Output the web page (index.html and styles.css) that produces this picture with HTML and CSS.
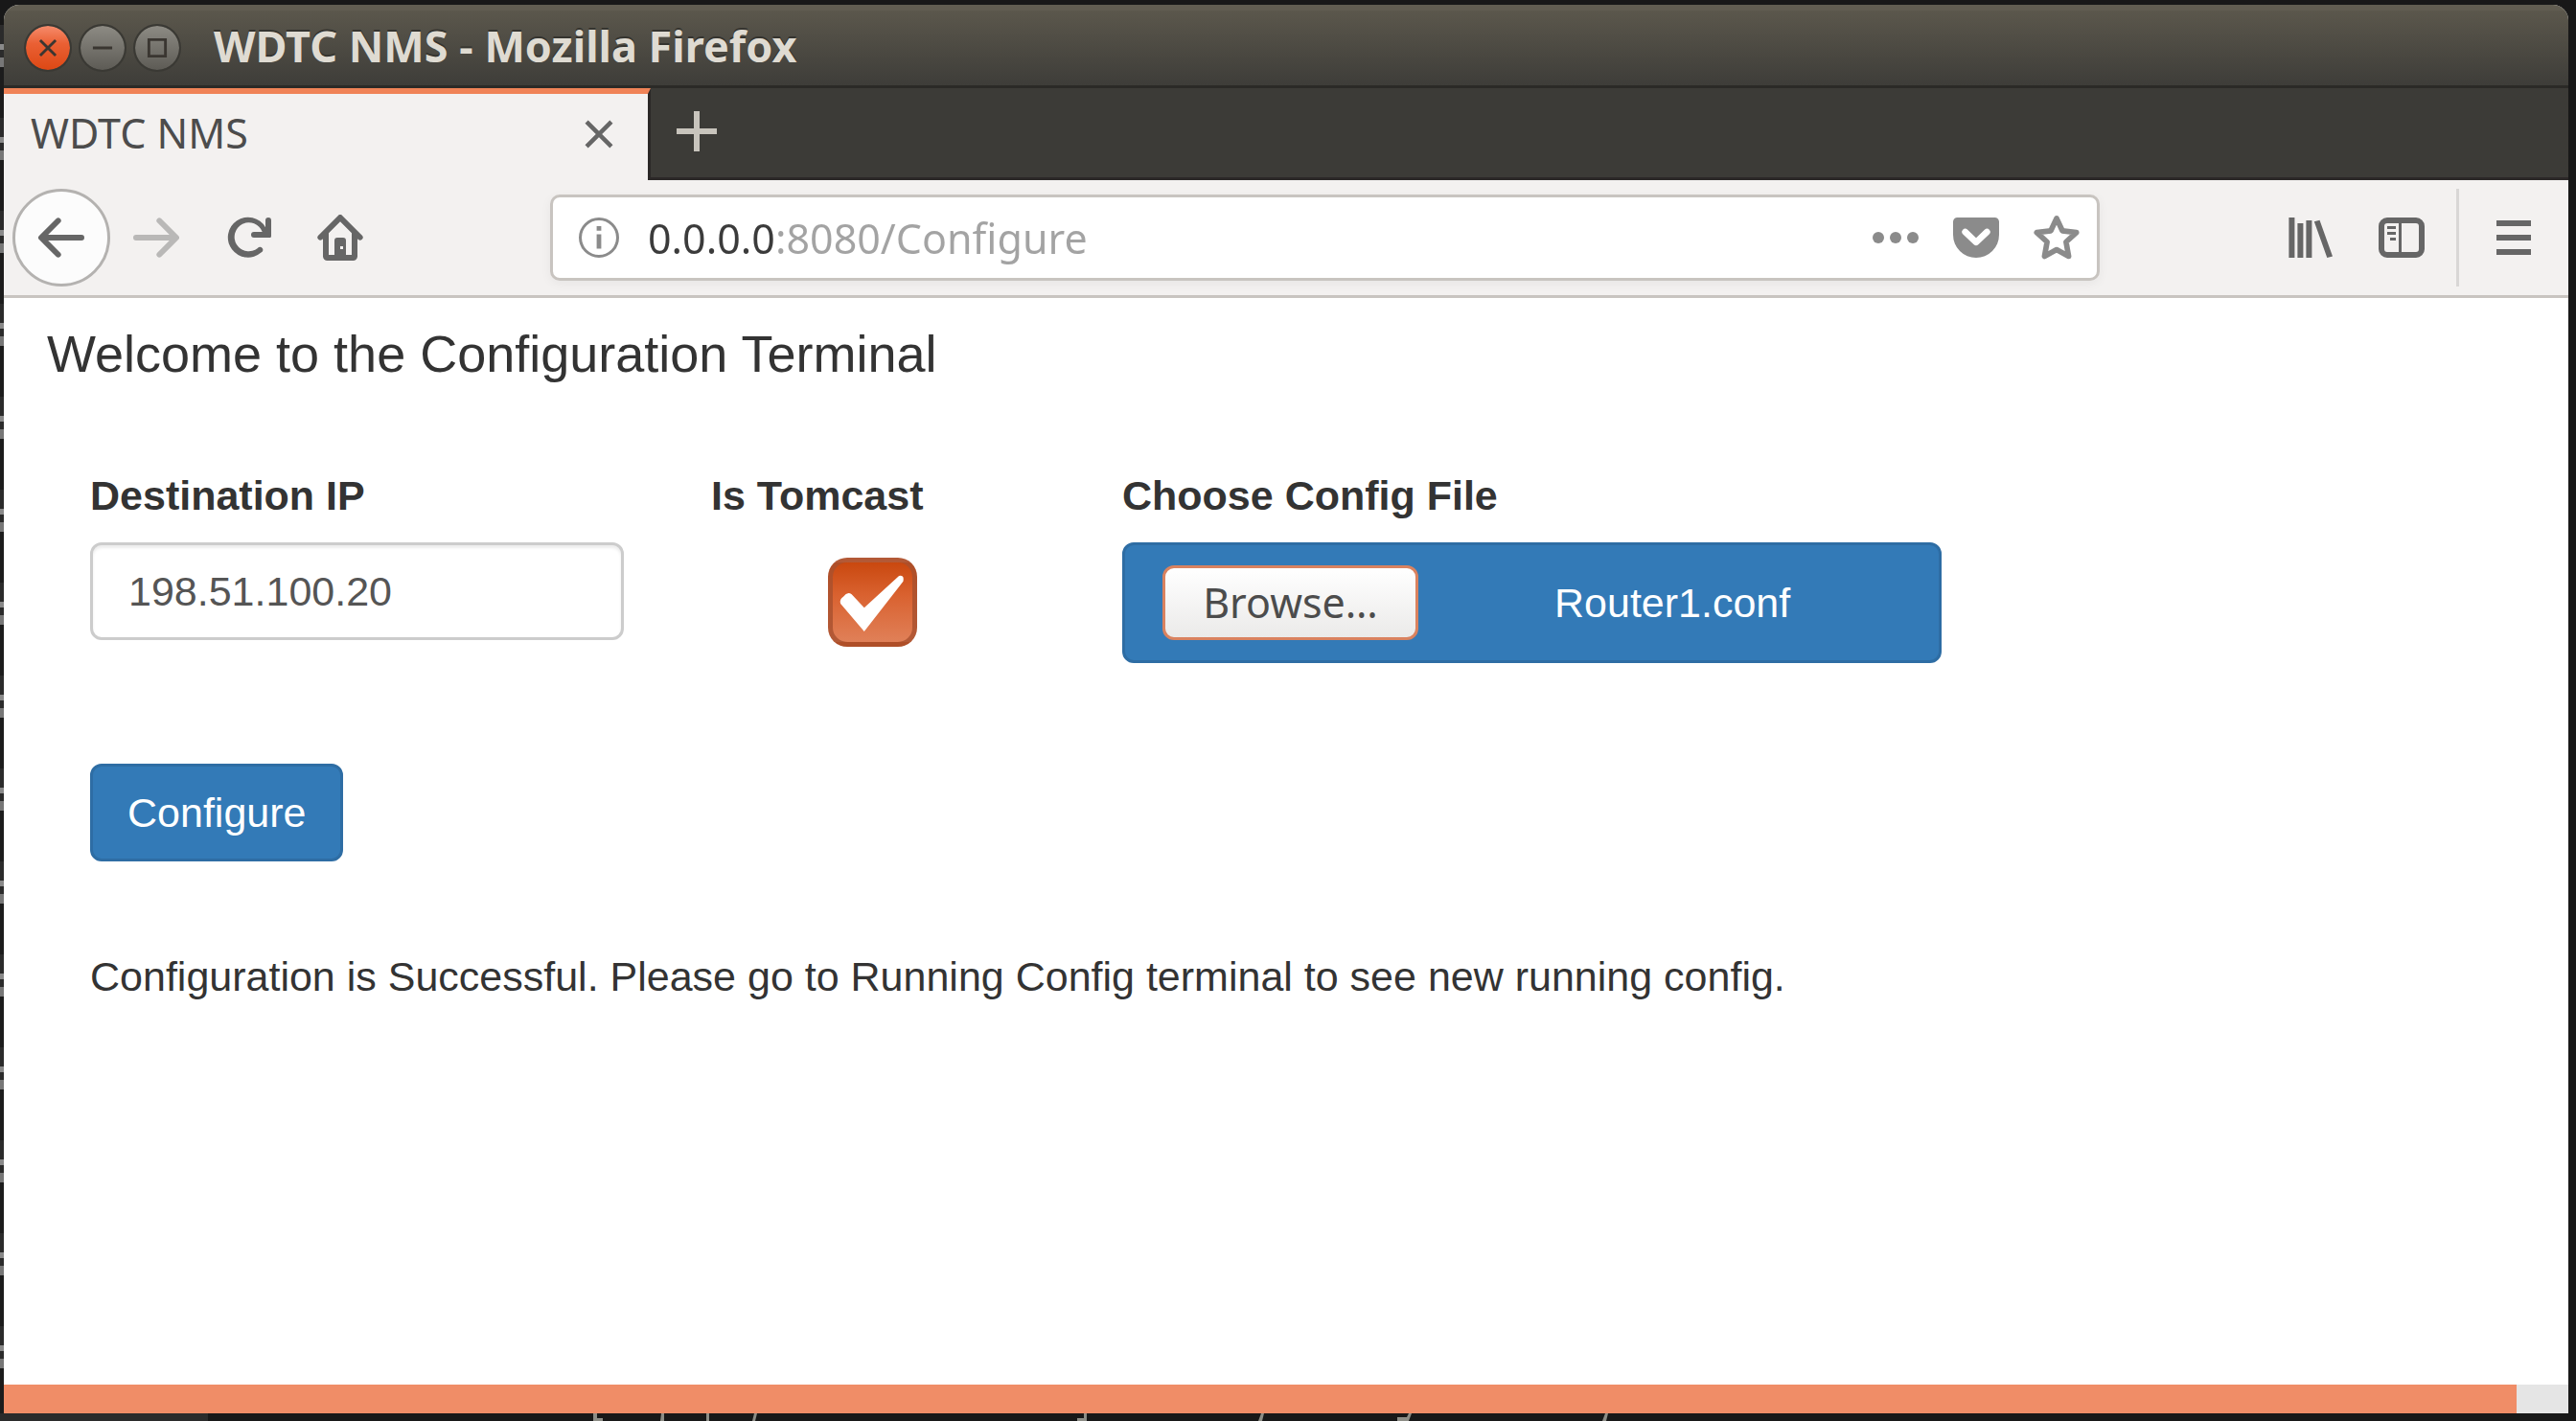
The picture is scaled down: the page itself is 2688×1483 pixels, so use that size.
FILE: index.html
```html
<!DOCTYPE html>
<html lang="en">
<head>
<meta charset="utf-8">
<title>WDTC NMS</title>
<link rel="stylesheet" href="styles.css">
</head>
<body class="desktop">
<div class="window">
  <header class="titlebar">
    <button class="wm wm-close" aria-label="Close window"><svg viewBox="0 0 16 16"><path d="M5.200 5.200l5.600 5.600M10.800 5.200l-5.600 5.600"/></svg></button>
    <button class="wm" aria-label="Minimize"><svg viewBox="0 0 16 16"><path d="M4.500 8h7"/></svg></button>
    <button class="wm" aria-label="Maximize"><svg viewBox="0 0 16 16"><path d="M5 5h6v6H5z"/></svg></button>
    <span class="title">WDTC NMS - Mozilla Firefox</span>
  </header>
  <div class="tabstrip">
    <div class="tab">
      <span class="tab-label">WDTC NMS</span>
      <button class="tab-close" aria-label="Close tab"><svg viewBox="0 0 10 10"><path d="M.7.7l8.600 8.600M9.300.7L.7 9.300" fill="none" stroke="currentColor" stroke-width="1.500"/></svg></button>
    </div>
    <button class="tab-new" aria-label="New tab"><svg viewBox="0 0 14 14"><path d="M7 0v14M0 7h14" fill="none" stroke="currentColor" stroke-width="2"/></svg></button>
  </div>
  <nav class="toolbar">
    <button class="tool tool-back" aria-label="Back"><svg viewBox="0 0 16 16"><path d="M15 7H3.400l4.300-4.300a1 1 0 0 0-1.400-1.400l-6 6a1 1 0 0 0 0 1.400l6 6a1 1 0 0 0 1.400-1.400L3.400 9H15a1 1 0 0 0 0-2z"/></svg></button>
    <button class="tool tool-off" aria-label="Forward"><svg viewBox="0 0 16 16"><path d="M1 7h11.600L8.300 2.700a1 1 0 0 1 1.400-1.400l6 6a1 1 0 0 1 0 1.400l-6 6a1 1 0 0 1-1.400-1.400L12.600 9H1a1 1 0 0 1 0-2z"/></svg></button>
    <button class="tool" aria-label="Reload"><svg viewBox="0 0 16 16"><path d="M15 1a1 1 0 0 0-1 1v2.400A7 7 0 1 0 12.500 13.200a1 1 0 1 0-1.200-1.500A5 5 0 1 1 12.900 6H10a1 1 0 0 0 0 2h5.500a.5.5 0 0 0 .5-.5V2a1 1 0 0 0-1-1z"/></svg></button>
    <button class="tool" aria-label="Home"><svg viewBox="0 0 16 16"><path d="M15.700 7.300l-7-7a1 1 0 0 0-1.400 0l-7 7a1 1 0 0 0 1.400 1.400l.3-.3V14.500a1.500 1.500 0 0 0 1.500 1.500h9a1.500 1.500 0 0 0 1.500-1.500V8.400l.3.3a1 1 0 0 0 1.400-1.400zM12 14h-2V9a1 1 0 0 0-1-1H7a1 1 0 0 0-1 1v5H4V6.400l4-4 4 4zM8 11h1v1H8z" fill-rule="evenodd"/></svg></button>
    <div class="urlbar">
      <svg class="icon" viewBox="0 0 16 16"><circle cx="8" cy="8" r="6.500" fill="none" stroke="currentColor"/><path d="M7.200 4h1.600v1.600H7.200zM7.200 6.800h1.600v5H7.200z"/></svg>
      <input class="url" type="text" aria-label="Address" value="0.0.0.0:8080/Configure">
      <button class="page-action" aria-label="Page actions"><svg class="icon" viewBox="0 0 16 16"><circle cx="2" cy="8" r="2"/><circle cx="8" cy="8" r="2"/><circle cx="14" cy="8" r="2"/></svg></button>
      <button class="page-action" aria-label="Save to Pocket"><svg class="icon" viewBox="0 0 16 16"><path d="M1.500 1h13A1.500 1.500 0 0 1 16 2.500V7A8 8 0 0 1 0 7V2.500A1.500 1.500 0 0 1 1.500 1z"/><path d="M4.200 6L8 9.600 11.800 6" fill="none" stroke="#fff" stroke-width="2.200" stroke-linecap="round" stroke-linejoin="round"/></svg></button>
      <button class="page-action" aria-label="Bookmark"><svg class="icon" viewBox="0 0 16 16"><path d="M8 1.300l2 4.300 4.900.6-3.600 3.300.9 5L8 12.200l-4.200 2.300.9-5L1.100 6.200 6 5.600z" fill="none" stroke="currentColor" stroke-width="1.900" stroke-linejoin="round"/></svg></button>
    </div>
    <button class="tool" aria-label="Library"><svg viewBox="0 0 16 16"><path d="M.8 1h2v14h-2zM3.800 3h2v12h-2zM6.800 2h2v13h-2zM9.600 2.400l1.900-.5L16 14.500l-1.900.5z"/></svg></button>
    <button class="tool" aria-label="Sidebars"><svg viewBox="0 0 16 16"><path d="M3 1h10a3 3 0 0 1 3 3v8a3 3 0 0 1-3 3H3a3 3 0 0 1-3-3V4a3 3 0 0 1 3-3zM3 3a1 1 0 0 0-1 1v8a1 1 0 0 0 1 1h4V3zM8 3v10h5a1 1 0 0 0 1-1V4a1 1 0 0 0-1-1zM3 4h3v1H3zM3 6h3v1H3zM4 8h2v1H4z" fill-rule="evenodd"/></svg></button>
    <span class="divider"></span>
    <button class="tool tool-menu" aria-label="Menu"><svg viewBox="0 0 16 16"><path d="M2 2h12v2H2zM2 7h12v2H2zM2 12h12v2H2z"/></svg></button>
  </nav>
  <main class="page">
    <h1>Welcome to the Configuration Terminal</h1>
    <form class="form">
      <div class="fields">
        <div class="field field-ip">
          <label for="ip">Destination IP</label>
          <input class="control" id="ip" type="text" value="198.51.100.20">
        </div>
        <div class="field field-tomcast">
          <label for="tomcast">Is Tomcast</label>
          <span class="check">
            <input id="tomcast" type="checkbox" checked>
            <svg viewBox="0 0 32 32"><path d="M5.500 14Q7 12 8.500 13.200L13 18 25.500 6.500Q27.500 6 27 8.500L13 26.500 4.500 16.500Q4 15 5.500 14z"/></svg>
          </span>
        </div>
        <div class="field field-file">
          <label for="config">Choose Config File</label>
          <div class="picker">
            <button class="browse" type="button">Browse…</button>
            <output class="filename" for="config">Router1.conf</output>
            <input class="picker-input" id="config" type="file">
          </div>
        </div>
      </div>
      <button class="submit" type="button">Configure</button>
      <p class="message">Configuration is Successful. Please go to Running Config terminal to see new running config.</p>
    </form>
  </main>
  <div class="scrollbar"><div class="thumb"></div></div>
</div>
<div class="behind-left"></div>
<svg class="behind-bottom" width="1800" height="8" viewBox="0 0 1800 8"><path d="M0 0h217v8H0z" fill="#2b2b2b"/><path d="M619 0h4v5h6v3h-10M690 0h3v8h-4M737 0h3v8h-3M787 0h3l-2 8h-3M1131 0h3v8h-10v-3h7M1316 0h3l-2 8h-4M1470 0h3l-3 8h-12v-4h10M1675 0h3l-2 8h-4" fill="#8d8d86"/></svg>
</body>
</html>
```
FILE: styles.css
```css
* { box-sizing: border-box; }

.desktop {
  margin: 0;
  min-height: 100vh;
  padding: 5px 8px 8px 4px;
  display: flex;
  background: #181818;
  position: relative;
}

.behind-left {
  position: absolute;
  left: 0;
  top: 26px;
  bottom: 0;
  width: 4px;
  background: repeating-linear-gradient(#2b2b2b 0 20px, #8a8a8a 20px 26px, #2b2b2b 26px 34px, #777 34px 44px, #1c1c1c 44px 97px);
}

.behind-bottom { position: absolute; left: 0; bottom: 0; }

button {
  margin: 0;
  padding: 0;
  border: 0;
  background: none;
  color: inherit;
  font: inherit;
}

svg { display: block; fill: currentColor; }

.window {
  flex: 1;
  min-width: 0;
  display: flex;
  flex-direction: column;
  border-radius: 16px 16px 0 0;
  overflow: hidden;
  background: #fff;
  font-family: "Noto Sans", "Open Sans", sans-serif;
  font-size: 43px;
}

/* Title bar */
.titlebar {
  height: 87px;
  display: flex;
  align-items: center;
  gap: 7px;
  padding: 0 21px;
  background: linear-gradient(#5b574c, #3e3d39);
  border-top: 6px solid #615d51;
  border-bottom: 3px solid #2b2a27;
  color: #dfdbd2;
}

.wm {
  width: 50px;
  height: 50px;
  border-radius: 50%;
  border: 2px solid #3a3934;
  background: linear-gradient(#8d8b84, #5d5b55);
  background-clip: padding-box;
}

.wm-close { background: linear-gradient(#f68c6c, #ea6034 40%, #dd4814); background-clip: padding-box; }

.wm svg { width: 46px; fill: none; stroke: #3a3631; stroke-width: 1; }

.title {
  margin-left: 27px;
  padding-bottom: 4px;
  font-size: 45px;
  font-weight: 700;
  line-height: 56px;
  text-shadow: 0 -2px 0 #35342f;
}

/* Tabs */
.tabstrip {
  height: 96px;
  display: flex;
  background: #3c3b37;
  box-shadow: inset 0 -3px #2b2827;
}

.tab {
  width: 675px;
  display: flex;
  align-items: center;
  justify-content: space-between;
  padding: 0 36px 6px 28px;
  border-top: 6px solid #f08357;
  border-right: 3px solid #2b2827;
  background: #f3f1f0;
  color: #4c4c4c;
}

.tab-label { padding-bottom: 4px; }
.tab-close { width: 30px; color: #666; }
.tab-new { width: 42px; margin-left: 27px; padding-bottom: 6px; color: #c8c4bc; }

/* Navigation */
.toolbar {
  height: 123px;
  display: flex;
  align-items: center;
  padding: 0 9px;
  background: #f3f1f0;
  border-bottom: 3px solid #c8c4c0;
  color: #666;
}

.tool { flex: none; width: 96px; padding: 24px; }
.tool svg, .icon { width: 48px; height: 48px; }

.tool-back {
  width: 102px;
  height: 102px;
  border: 3px solid #b4b2b0;
  border-radius: 50%;
  background: #fcfcfc;
}

.tool-off { color: #b9b8b7; }

.urlbar {
  flex: 1;
  min-width: 0;
  height: 90px;
  margin: 0 171px;
  padding: 0 18px 0 24px;
  display: flex;
  align-items: center;
  gap: 36px;
  border: 3px solid #c8c4c0;
  border-radius: 10px;
  background: #fff;
  box-shadow: 0 3px 12px #0000000d;
  color: #8b8b8b;
}

/* The host is drawn darker than the port and path */
.url {
  flex: 1;
  min-width: 0;
  height: 60px;
  margin-left: -9px;
  padding: 0;
  border: 0;
  outline: 0;
  font: inherit;
  color: transparent;
  background: linear-gradient(to right, #3b3b3b 134px, #a3a3a3 134px);
  background-clip: text;
}

.icon { flex: none; }

.divider { width: 3px; height: 102px; margin: 0 9px; background: #d9d7d6; }

/* Page */
.page {
  flex: 1;
  padding: 28px 45px 60px;
  color: #333;
  font-family: "Liberation Sans", Arial, sans-serif;
}

h1 { margin: 0; font-size: 54px; font-weight: 400; line-height: 60px; }

.form { padding: 88px 45px 0; line-height: 60px; }
.fields { display: flex; align-items: flex-start; }
.field { display: flex; flex-direction: column; }
.field label { font-weight: 700; margin-bottom: 19px; }
.field-ip { width: 557px; }
.field-tomcast { margin-left: 91px; width: 429px; }
.field-file { width: 855px; }

.control {
  width: 100%;
  height: 102px;
  padding: 0 37px;
  border: 3px solid #ccc;
  border-radius: 12px;
  box-shadow: inset 0 3px 3px #00000013;
  font: inherit;
  color: #555;
}

.check { position: relative; width: 93px; height: 93px; margin: 16px 0 0 122px; }

.check input {
  appearance: none;
  display: block;
  width: 93px;
  height: 93px;
  margin: 0;
  border: 5px solid #a8502ecc;
  border-radius: 20px;
  background: linear-gradient(#c9480f, #d9612f 40%, #e08058);
}

.check svg { position: absolute; inset: 0; fill: #fff; pointer-events: none; }

.picker {
  position: relative;
  height: 126px;
  padding: 0 39px;
  display: flex;
  align-items: center;
  border: 3px solid #2e6da4;
  border-radius: 12px;
  background: #337ab7;
  color: #fff;
}

.browse {
  width: 267px;
  height: 78px;
  border: 3px solid #d9825f;
  border-radius: 12px;
  background: linear-gradient(#fff, #ebeae9);
  color: #4c4c4c;
  font-family: "Noto Sans", "Open Sans", sans-serif;
  line-height: 60px;
}

.filename { margin-left: 142px; }

.picker-input { position: absolute; inset: 0; width: 100%; opacity: 0; }

.submit {
  display: block;
  height: 102px;
  margin-top: 105px;
  padding: 0 36px;
  border: 3px solid #2e6da4;
  border-radius: 12px;
  background: #337ab7;
  color: #fff;
}

.message { margin: 90px 0 0; }

.scrollbar { height: 30px; padding-right: 54px; background: #e5e5e5; }
.thumb { height: 100%; background: #f08d67; }
```
